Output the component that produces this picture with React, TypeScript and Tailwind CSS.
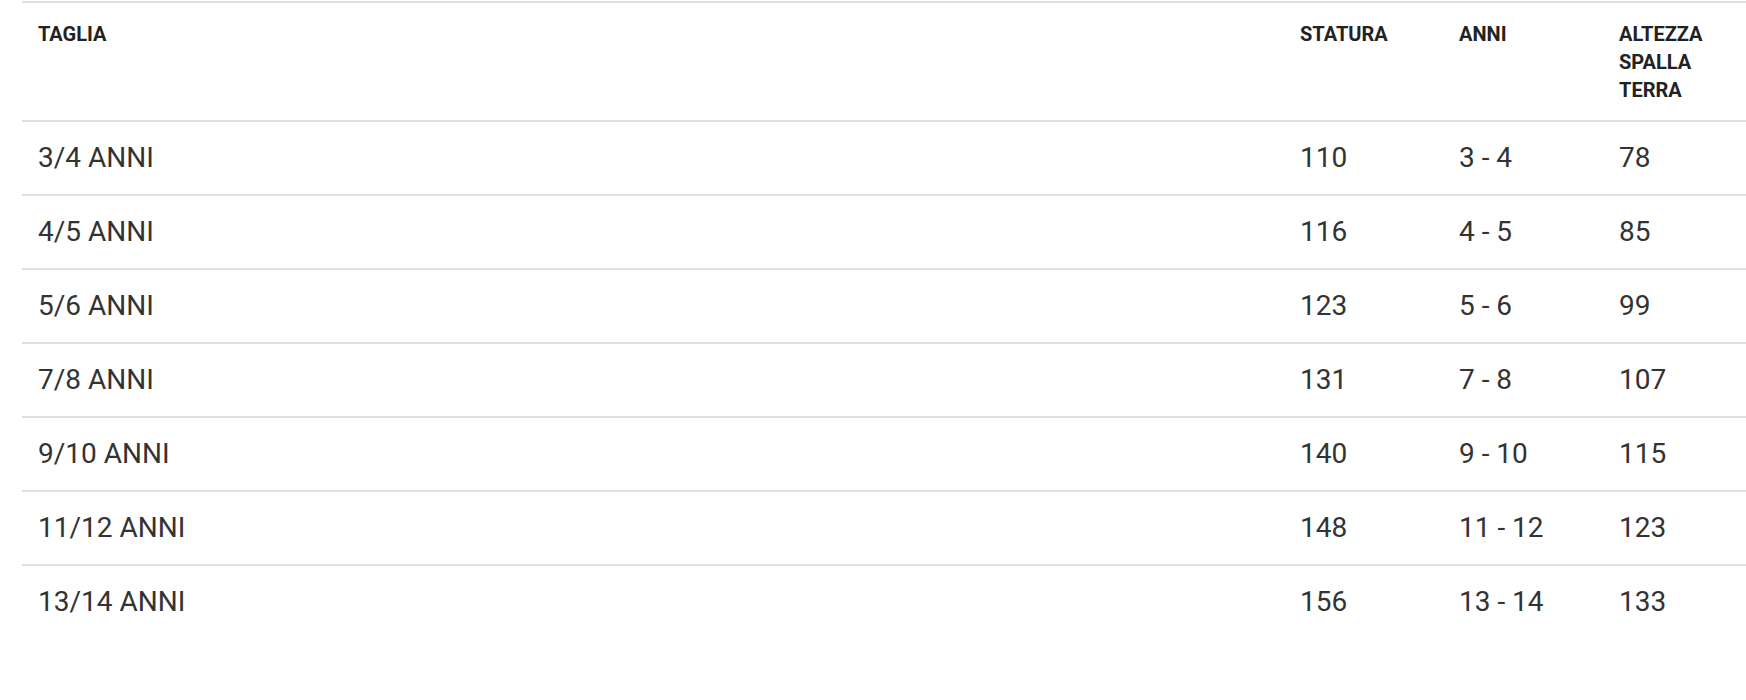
import React from "react";

const rows = [
  { taglia: "3/4 ANNI", statura: "110", anni: "3 - 4", spalla: "78" },
  { taglia: "4/5 ANNI", statura: "116", anni: "4 - 5", spalla: "85" },
  { taglia: "5/6 ANNI", statura: "123", anni: "5 - 6", spalla: "99" },
  { taglia: "7/8 ANNI", statura: "131", anni: "7 - 8", spalla: "107" },
  { taglia: "9/10 ANNI", statura: "140", anni: "9 - 10", spalla: "115" },
  { taglia: "11/12 ANNI", statura: "148", anni: "11 - 12", spalla: "123" },
  { taglia: "13/14 ANNI", statura: "156", anni: "13 - 14", spalla: "133" },
];

const headers = ["Taglia", "Statura", "Anni", "Altezza spalla terra"];

export default function App() {
  return (
    <div
      className="w-[1746px] h-[700px] overflow-hidden bg-white pt-px pl-[22px] text-[#333]"
      style={{ fontFamily: "Roboto, 'Liberation Sans', sans-serif" }}
    >
      <table className="table-fixed w-[1741px] border-collapse">
        <colgroup>
          <col className="w-[1262px]" />
          <col className="w-[159px]" />
          <col className="w-[160px]" />
          <col className="w-[160px]" />
        </colgroup>
        <thead>
          <tr className="border-t-2 border-b-2 border-[#e0e0e0]">
            {headers.map((h) => (
              <th
                key={h}
                className="text-left align-top uppercase font-bold text-[20px] leading-[28px] text-[#222] pl-4 pr-4 pt-[17px] pb-[16px]"
              >
                {h}
              </th>
            ))}
          </tr>
        </thead>
        <tbody>
          {rows.map((r, i) => (
            <tr
              key={r.taglia}
              className={i < rows.length - 1 ? "border-b-2 border-[#e0e0e0]" : ""}
            >
              <td className="pl-4 py-[15px] text-[28px] leading-[42px]">{r.taglia}</td>
              <td className="pl-4 py-[15px] text-[28px] leading-[42px]">{r.statura}</td>
              <td className="pl-4 py-[15px] text-[28px] leading-[42px]">{r.anni}</td>
              <td className="pl-4 py-[15px] text-[28px] leading-[42px]">{r.spalla}</td>
            </tr>
          ))}
        </tbody>
      </table>
    </div>
  );
}
